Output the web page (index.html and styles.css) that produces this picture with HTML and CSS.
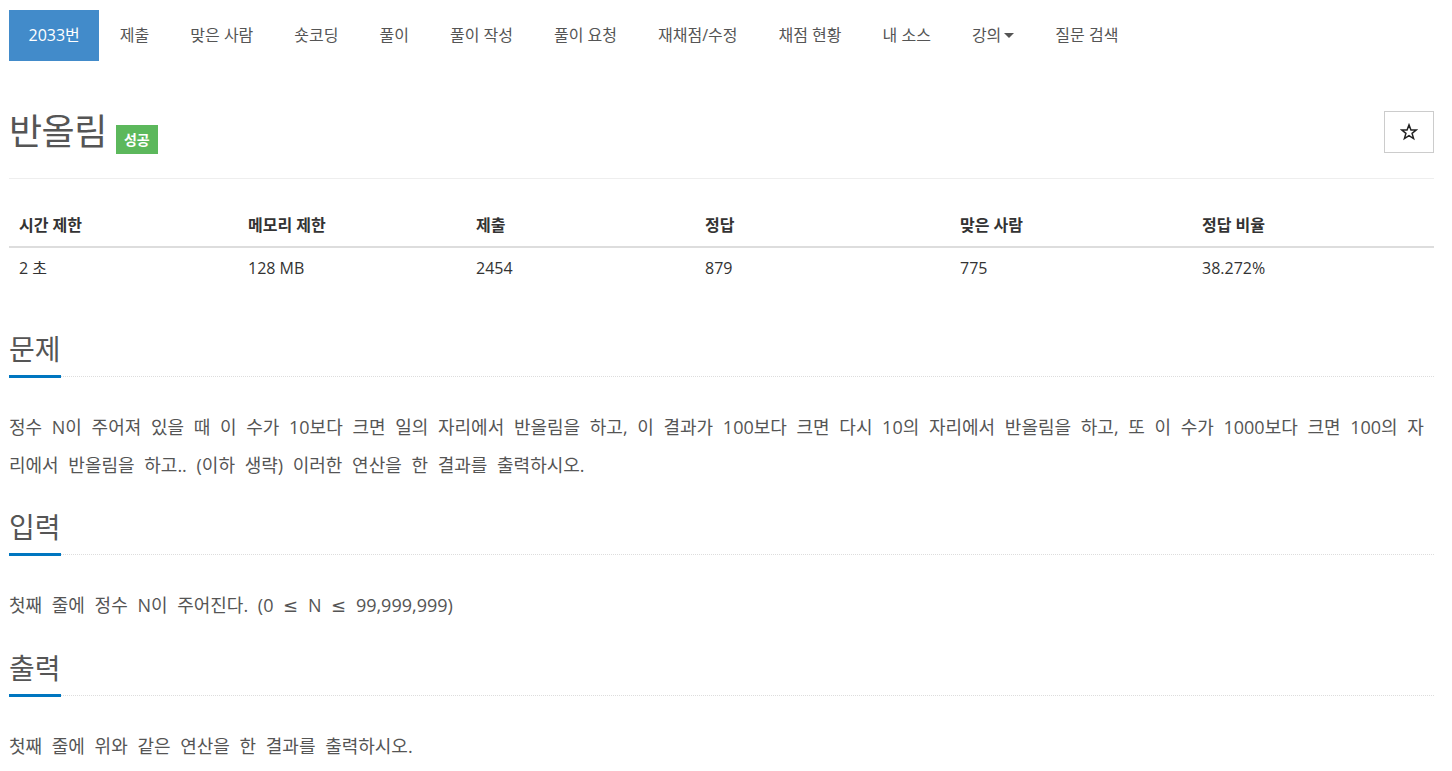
FILE: index.html
```html
<!DOCTYPE html>
<html lang="ko">
<head>
<meta charset="utf-8">
<title>2033번: 반올림</title>
<link rel="stylesheet" href="styles.css">
</head>
<body>
<div class="wrap">
  <ul class="nav">
    <li class="nav-item active">2033번</li>
    <li class="nav-item">제출</li>
    <li class="nav-item">맞은 사람</li>
    <li class="nav-item">숏코딩</li>
    <li class="nav-item">풀이</li>
    <li class="nav-item">풀이 작성</li>
    <li class="nav-item">풀이 요청</li>
    <li class="nav-item">재채점/수정</li>
    <li class="nav-item">채점 현황</li>
    <li class="nav-item">내 소스</li>
    <li class="nav-item">강의<span class="caret"></span></li>
    <li class="nav-item">질문 검색</li>
  </ul>

  <div class="page-header">
    <div class="title-group">
      <h1 class="title">반올림</h1>
      <span class="label-ac">성공</span>
    </div>
    <button class="star-btn" type="button" aria-label="즐겨찾기">
      <svg width="18" height="18" viewBox="0 0 24 24"><polygon points="12,2.5 14.6,9.2 21.6,9.4 16.1,13.8 18.1,20.7 12,16.7 5.9,20.7 7.9,13.8 2.4,9.4 9.4,9.2" fill="none" stroke="#222" stroke-width="2" stroke-linejoin="miter"/></svg>
    </button>
  </div>
  <hr class="divider">

  <table class="info">
    <thead>
      <tr><th class="c1">시간 제한</th><th class="c2">메모리 제한</th><th class="c3">제출</th><th class="c4">정답</th><th class="c5">맞은 사람</th><th class="c6">정답 비율</th></tr>
    </thead>
    <tbody>
      <tr><td>2 초</td><td>128 MB</td><td>2454</td><td>879</td><td>775</td><td>38.272%</td></tr>
    </tbody>
  </table>

  <section class="section first">
    <div class="headline"><h2>문제</h2></div>
    <p class="text">정수 N이 주어져 있을 때 이 수가 10보다 크면 일의 자리에서 반올림을 하고, 이 결과가 100보다 크면 다시 10의 자리에서 반올림을 하고, 또 이 수가 1000보다 크면 100의 자리에서 반올림을 하고.. (이하 생략) 이러한 연산을 한 결과를 출력하시오.</p>
  </section>

  <section class="section">
    <div class="headline"><h2>입력</h2></div>
    <p class="text">첫째 줄에 정수 N이 주어진다. (0 <span class="sym">≤</span> N <span class="sym">≤</span> 99,999,999)</p>
  </section>

  <section class="section">
    <div class="headline"><h2>출력</h2></div>
    <p class="text">첫째 줄에 위와 같은 연산을 한 결과를 출력하시오.</p>
  </section>
</div>
</body>
</html>
```

FILE: styles.css
```css
* { box-sizing: border-box; }
html, body { margin: 0; padding: 0; background: #fff; }
body {
  font-family: "Open Sans", "Noto Sans CJK KR", sans-serif;
  color: #333;
  font-size: 14px;
  line-height: 20px;
}
.wrap { padding: 10px 18px 0 9px; }

.nav {
  list-style: none;
  margin: 0;
  padding: 0;
  display: flex;
  height: 51px;
}
.nav-item {
  padding: 0 20.5px;
  line-height: 51px;
  color: #555;
  font-size: 16px;
  white-space: nowrap;
}
.nav-item.active { background: #428bca; color: #fff; padding: 0 19.5px; }
.caret {
  display: inline-block;
  width: 0; height: 0;
  border-top: 5px solid #555;
  border-left: 5px solid transparent;
  border-right: 5px solid transparent;
  margin-left: 3px;
  vertical-align: 3px;
}

.page-header {
  display: flex;
  justify-content: space-between;
  align-items: center;
  margin-top: 50px;
  height: 42px;
}
.title-group { display: flex; align-items: center; }
.title {
  margin: 0;
  font-size: 36px;
  font-weight: 400;
  line-height: 40px;
  color: #555;
  letter-spacing: -0.5px;
}
.label-ac {
  display: inline-block;
  margin-left: 9px;
  margin-top: 14px;
  height: 29px;
  line-height: 29px;
  padding: 0 8px;
  background: #5cb85c;
  color: #fff;
  font-size: 14px;
  font-weight: 700;
}
.star-btn {
  width: 50px;
  height: 42px;
  border: 1px solid #ccc;
  background: #fff;
  padding: 0;
  display: flex;
  align-items: center;
  justify-content: center;
}
.divider {
  border: 0;
  border-top: 1px solid #eee;
  margin: 25px 0 0 0;
}

.info {
  width: 100%;
  border-collapse: collapse;
  margin-top: 24px;
  color: #333;
  font-size: 16px;
}
.info th {
  text-align: left;
  font-weight: 700;
  padding: 12px 10px 11px;
  border-bottom: 2px solid #ddd;
}
.info td { padding: 10px 10px 11px; }
.c1 { width: 229px; }
.c2 { width: 228px; }
.c3 { width: 229px; }
.c4 { width: 255px; }
.c5 { width: 242px; }

.section.first { margin-top: 45px; }
.headline {
  border-bottom: 1px dotted #ddd;
  margin-bottom: 31px;
}
.headline h2 {
  display: inline-block;
  margin: 0 0 -2px 0;
  font-size: 28px;
  font-weight: 400;
  line-height: 30px;
  padding-bottom: 11px;
  border-bottom: 3px solid #0076c0;
  color: #555;
}
.text {
  margin: 0 0 28px 0;
  font-size: 18px;
  line-height: 38px;
  color: #555;
  word-spacing: 5px;
}
.sym {
  font-family: "DejaVu Sans", sans-serif;
  font-size: 18px;
}
```
